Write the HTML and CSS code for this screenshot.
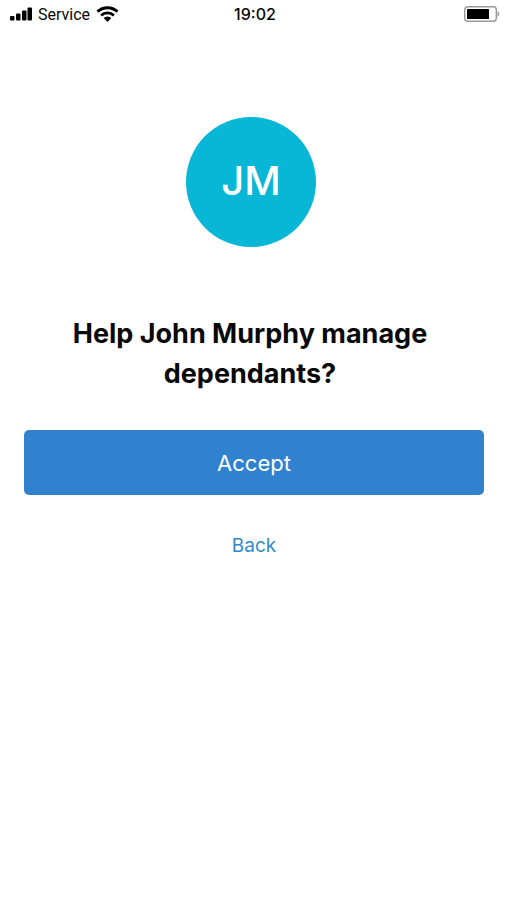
FILE: index.html
```html
<!DOCTYPE html>
<html lang="en">
<head>
<meta charset="utf-8">
<meta name="viewport" content="width=device-width, initial-scale=1">
<title>Manage dependants</title>
<link rel="stylesheet" href="styles.css">
</head>
<body>
<header class="status">
  <div class="status-left">
    <svg width="22" height="14" viewBox="0 0 22 14" aria-hidden="true"><rect x="0" y="9" width="4.500" height="4.500" rx="1"/><rect x="6" y="6.500" width="4.500" height="7" rx="1"/><rect x="12" y="3.500" width="4.500" height="10" rx="1"/><rect x="17.500" y=".5" width="4.500" height="13" rx="1"/></svg>
    <span class="carrier">Service</span>
    <svg width="23" height="16" viewBox="0 0 22 16" aria-hidden="true"><path d="M0 4.600a16 16 0 0 1 22 0l-2 2.200a13 13 0 0 0-18 0z"/><path d="M3.600 8.400a10.700 10.700 0 0 1 14.800 0l-2 2.100a7.800 7.800 0 0 0-10.800 0z"/><path d="M7.200 12.100a5.500 5.500 0 0 1 7.600 0L11 16z"/></svg>
  </div>
  <time class="status-time">19:02</time>
  <svg class="battery" width="36" height="16" viewBox="0 0 36 16" aria-hidden="true"><rect x=".7" y=".7" width="31.600" height="14.600" rx="3" fill="none" stroke="#999" stroke-width="1.400"/><rect x="3" y="3" width="22" height="10" rx=".5"/><path d="M33.500 5q3.500 3 0 6z" fill="#999"/></svg>
</header>
<main class="content">
  <div class="avatar">JM</div>
  <h1 class="title">Help John Murphy manage dependants?</h1>
  <button class="accept" type="button">Accept</button>
  <a class="back" href="#">Back</a>
</main>
</body>
</html>
```
FILE: styles.css
```css
* { box-sizing: border-box; }
body { margin: 0; background: #fff; color: #080808; font-family: Inter, sans-serif; }
.status { display: grid; grid-template-columns: 1fr auto 1fr; align-items: center; height: 28px; padding: 0 7px 0 10px; font-size: 16px; }
.status-left { display: flex; align-items: center; gap: 6px; }
.carrier { font-family: Roboto, sans-serif; }
.status-time { font-weight: 500; }
.battery { justify-self: end; }
.content { display: flex; flex-direction: column; align-items: center; padding: 89px 23px 24px 24px; }
.avatar { display: flex; align-items: center; justify-content: center; width: 130px; height: 130px; margin-right: 6px; border-radius: 50%; background: #08b6d5; color: #fff; font-size: 40px; line-height: 48px; font-weight: 500; padding-bottom: 2px; }
.title { max-width: 400px; margin: 67px 8px 0 0; font-size: 27px; line-height: 40px; font-weight: 700; text-align: center; }
.accept { width: 100%; height: 65px; margin-top: 36px; border: 0; border-radius: 5px; background: #3182ce; color: #fff; font: 400 22px Inter, sans-serif; }
.back { margin-top: 39px; color: #3489c9; font-size: 19px; line-height: 24px; text-decoration: none; }
```
